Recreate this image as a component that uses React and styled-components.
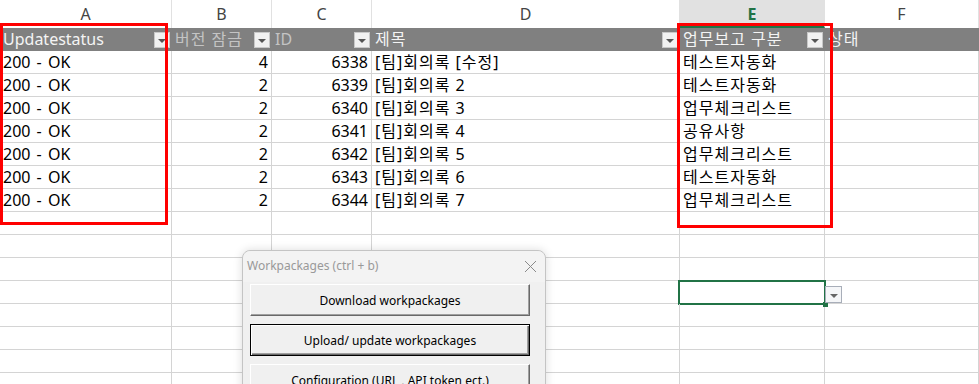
import React from "react";
import styled, { createGlobalStyle, css } from "styled-components";

const Global = createGlobalStyle`
  html, body { margin: 0; padding: 0; background: #fff; }
  body { font-family: "Noto Sans", "Noto Sans CJK KR", sans-serif; }
`;

const Page = styled.div`
  position: relative;
  width: 979px;
  height: 384px;
  overflow: hidden;
  background: #fff;
`;

const Sheet = styled.div`
  display: grid;
  grid-template-columns: 172px 100px 100px 308px 145px 1fr;
  grid-auto-rows: 23px;
  grid-template-rows: 28px 23px;
  font-family: "Noto Sans", "Noto Sans CJK KR", sans-serif;
  font-size: 16px;
`;

const ColHead = styled.div`
  box-sizing: border-box;
  display: flex;
  justify-content: center;
  padding-top: 3px;
  color: #444;
  font-size: 16px;
  border-right: 1px solid #e1e1e1;
  ${(p) =>
    p.$active &&
    css`
      background: #e1e1e1;
      border-bottom: 2px solid #217346;
      color: #217346;
      font-weight: 700;
    `}
`;

const HeadCell = styled.div`
  box-sizing: border-box;
  background: #808080;
  display: flex;
  align-items: center;
  justify-content: space-between;
  padding: 0 2px 0 3px;
  color: ${(p) => (p.$dim ? "#c4c4c4" : "#f4f4f4")};
  letter-spacing: ${(p) => (p.$wide ? "1px" : "0")};
  white-space: nowrap;
  line-height: 23px;
`;

const FilterBtn = styled.span`
  box-sizing: border-box;
  width: 16px;
  height: 16px;
  background: #f1f1f1;
  border: 1px solid #c8c8c8;
  display: flex;
  align-items: center;
  justify-content: center;
  padding-top: 3px;
  flex: none;
  &::before {
    content: "";
    border-left: 4px solid transparent;
    border-right: 4px solid transparent;
    border-top: 4px solid #555;
  }
`;

const Cell = styled.div`
  position: relative;
  box-sizing: border-box;
  border-right: 1px solid #d4d4d4;
  border-bottom: 1px solid #d4d4d4;
  padding: 0 3px;
  color: #000;
  line-height: 22px;
  white-space: nowrap;
  text-align: ${(p) => (p.$num ? "right" : "left")};
  letter-spacing: ${(p) => (p.$wide ? "1px" : "0")};
  word-spacing: ${(p) => (p.$spaced ? "2px" : "0")};
  ${(p) =>
    p.$selected &&
    css`
      &::after {
        content: "";
        position: absolute;
        left: -2px;
        top: -1px;
        right: -2px;
        bottom: -2px;
        border: 2px solid #217346;
      }
      &::before {
        content: "";
        position: absolute;
        right: -4px;
        bottom: -4px;
        width: 5px;
        height: 5px;
        background: #217346;
        z-index: 2;
      }
    `}
`;

const CellDrop = styled.span`
  position: absolute;
  left: calc(100% + 1px);
  top: 5px;
  box-sizing: border-box;
  width: 17px;
  height: 17px;
  background: #f5f6f8;
  border: 1px solid #a8aeb9;
  display: flex;
  align-items: center;
  justify-content: center;
  padding-top: 2px;
  z-index: 3;
  &::before {
    content: "";
    border-left: 4px solid transparent;
    border-right: 4px solid transparent;
    border-top: 4px solid #666;
  }
`;

const RedBox = styled.div`
  position: absolute;
  box-sizing: border-box;
  border: 3px solid #ff0000;
  left: ${(p) => p.$x}px;
  top: ${(p) => p.$y}px;
  width: ${(p) => p.$w}px;
  height: ${(p) => p.$h}px;
  pointer-events: none;
`;

const Dialog = styled.div`
  position: absolute;
  left: 242px;
  top: 250px;
  width: 304px;
  height: 160px;
  box-sizing: border-box;
  background: #f0f0f0;
  border: 1px solid #c4c4c4;
  border-radius: 8px 8px 0 0;
  box-shadow: 0 0 10px rgba(0, 0, 0, 0.14);
  font-family: "Noto Sans", "Segoe UI", sans-serif;
`;

const TitleBar = styled.div`
  height: 31px;
  display: flex;
  align-items: center;
  justify-content: space-between;
  padding: 0 8px 0 4px;
  background: #f3f3f3;
  border-radius: 8px 8px 0 0;
`;

const Title = styled.span`
  font-size: 12px;
  color: #999;
  margin-top: -2px;
`;

const Body = styled.div`
  display: flex;
  flex-direction: column;
  gap: 8px;
  padding: 2px 15px 0 7px;
`;

const Btn = styled.div`
  box-sizing: border-box;
  height: 32px;
  display: flex;
  align-items: center;
  justify-content: center;
  font-size: 12px;
  color: #000;
  background: #f0f0f0;
  border-top: 1px solid #fff;
  border-left: 1px solid #fff;
  border-right: 1px solid #696969;
  border-bottom: 1px solid #696969;
  box-shadow: inset -1px -1px 0 #a0a0a0;
  ${(p) =>
    p.$default &&
    css`
      border: 1px solid #000;
      box-shadow: inset 1px 1px 0 #fff, inset -1px -1px 0 #696969,
        inset -2px -2px 0 #a0a0a0;
    `}
`;

const rows = [
  ["200 - OK", 4, 6338, "[팀]회의록 [수정]", "테스트자동화"],
  ["200 - OK", 2, 6339, "[팀]회의록 2", "테스트자동화"],
  ["200 - OK", 2, 6340, "[팀]회의록 3", "업무체크리스트"],
  ["200 - OK", 2, 6341, "[팀]회의록 4", "공유사항"],
  ["200 - OK", 2, 6342, "[팀]회의록 5", "업무체크리스트"],
  ["200 - OK", 2, 6343, "[팀]회의록 6", "테스트자동화"],
  ["200 - OK", 2, 6344, "[팀]회의록 7", "업무체크리스트"],
];
const allRows = [...rows, ...Array.from({ length: 8 }, () => ["", "", "", "", ""])];

const headers = [
  { t: "Updatestatus", f: true },
  { t: "버전 잠금", f: true, dim: true, wide: true },
  { t: "ID", f: true, dim: true },
  { t: "제목", f: true, wide: true },
  { t: "업무보고 구분", f: true, wide: true },
  { t: "상태", f: false, wide: true },
];

export default function App() {
  return (
    <Page>
      <Global />
      <Sheet>
        {["A", "B", "C", "D", "E", "F"].map((c) => (
          <ColHead key={c} $active={c === "E"}>
            {c}
          </ColHead>
        ))}
        {headers.map((h, i) => (
          <HeadCell key={i} $dim={h.dim} $wide={h.wide}>
            <span>{h.t}</span>
            {h.f && <FilterBtn />}
          </HeadCell>
        ))}
        {allRows.map((r, ri) => (
          <React.Fragment key={ri}>
            <Cell $spaced>{r[0]}</Cell>
            <Cell $num>{r[1]}</Cell>
            <Cell $num>{r[2]}</Cell>
            <Cell $wide>{r[3]}</Cell>
            <Cell $wide $selected={ri === 10}>
              {r[4]}
              {ri === 10 && <CellDrop />}
            </Cell>
            <Cell />
          </React.Fragment>
        ))}
      </Sheet>
      <RedBox $x={0} $y={23} $w={168} $h={202} />
      <RedBox $x={677} $y={23} $w={156} $h={205} />
      <Dialog>
        <TitleBar>
          <Title>Workpackages (ctrl + b)</Title>
          <svg width="13" height="13" viewBox="0 0 13 13">
            <path d="M1 1 L12 12 M12 1 L1 12" stroke="#8a8a8a" strokeWidth="1" />
          </svg>
        </TitleBar>
        <Body>
          <Btn>Download workpackages</Btn>
          <Btn $default>Upload/ update workpackages</Btn>
          <Btn>Configuration (URL , API token ect.)</Btn>
        </Body>
      </Dialog>
    </Page>
  );
}
